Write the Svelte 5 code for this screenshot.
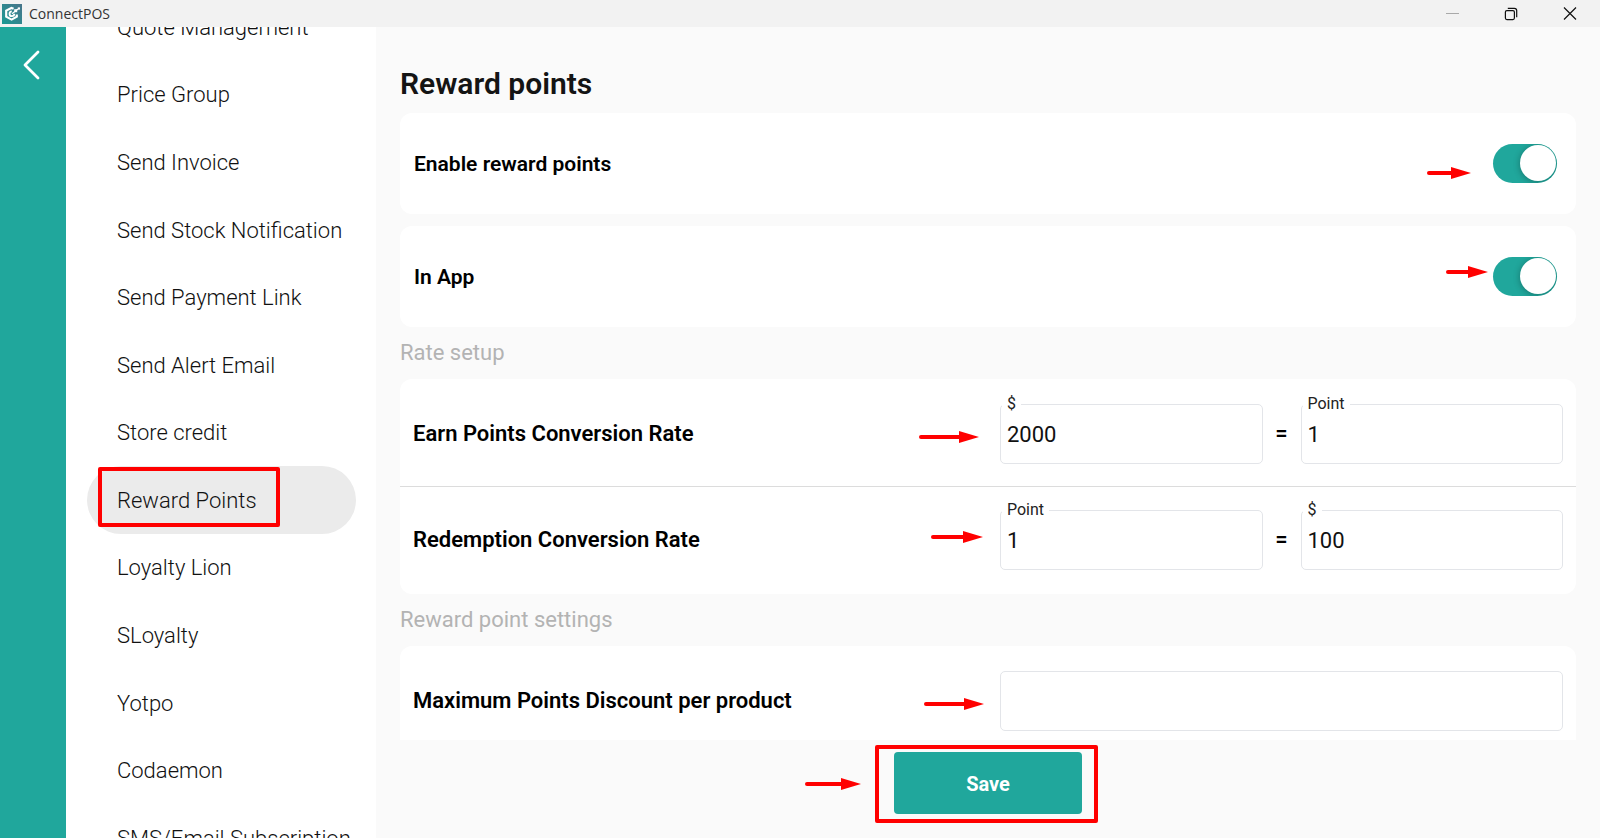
<script>
  const sections = [
    'Quote Management',
    'Price Group',
    'Send Invoice',
    'Send Stock Notification',
    'Send Payment Link',
    'Send Alert Email',
    'Store credit',
    'Reward Points',
    'Loyalty Lion',
    'SLoyalty',
    'Yotpo',
    'Codaemon',
    'SMS/Email Subscription'
  ];

  let current = $state('Reward Points');

  let switches = $state([
    { id: 'enable', label: 'Enable reward points', on: true, arrow: 44, right: 105, drop: 9 },
    { id: 'inapp', label: 'In App', on: true, arrow: 42, right: 88, drop: -5 }
  ]);

  let rates = $state([
    {
      id: 'earn',
      title: 'Earn Points Conversion Rate',
      from: { unit: '$', value: '2000' },
      to: { unit: 'Point', value: '1' },
      arrow: 60,
      right: 597,
      drop: 4
    },
    {
      id: 'redeem',
      title: 'Redemption Conversion Rate',
      from: { unit: 'Point', value: '1' },
      to: { unit: '$', value: '100' },
      arrow: 52,
      right: 593,
      drop: -3
    }
  ]);

  let maximum = $state('');
</script>

{#snippet pointer(length, right, drop)}
  <svg
    class="pointer"
    style="right: {right}px; margin-top: {drop - 7}px"
    width={length}
    height="14"
    viewBox="0 0 {length} 14"
    aria-hidden="true"
  >
    <path d="M2 7H{length - 18}" stroke="#f00" stroke-width="4" stroke-linecap="round" />
    <path d="M{length - 20} 1L{length} 7L{length - 20} 13Z" fill="#f00" />
  </svg>
{/snippet}

{#snippet field(id, data)}
  <div class="field">
    <label for={id}>{data.unit}</label>
    <input {id} type="text" bind:value={data.value} />
  </div>
{/snippet}

<div class="window">
  <header class="titlebar">
    <svg class="logo" width="20" height="20" viewBox="0 0 20 20" aria-hidden="true">
      <defs>
        <linearGradient id="tile" x1="0" y1="1" x2="1" y2="0">
          <stop offset="0" stop-color="#1b9a94" />
          <stop offset="1" stop-color="#48748a" />
        </linearGradient>
      </defs>
      <rect width="20" height="20" fill="url(#tile)" />
      <path
        d="M11.6 4.8L9.4 3.9L4.2 6.6V12.6L9.6 15.6L14.8 12.6V10.4"
        fill="none"
        stroke="#fff"
        stroke-width="2.2"
      />
      <path d="M12.3 9.8A2.4 2.4 0 1 1 9.8 7.4" fill="none" stroke="#fff" stroke-width="1.8" />
      <path d="M10 9.8L16 5" stroke="#fff" stroke-width="1.2" />
      <rect x="12.2" y="5.2" width="3" height="3" fill="#fff" />
      <rect x="15.8" y="3.4" width="2.2" height="2.2" fill="#fff" />
    </svg>
    <span class="name">ConnectPOS</span>
    <div class="controls">
      <button type="button" aria-label="Minimize">
        <svg width="14" height="14" viewBox="0 0 14 14"><path d="M1 6.5H14" stroke="#a9a9a9" /></svg>
      </button>
      <button type="button" aria-label="Restore">
        <svg width="14" height="14" viewBox="0 0 14 14" fill="none" stroke="#111" stroke-width="1.2">
          <rect x="1.4" y="3.6" width="9" height="9" rx="1.5" />
          <path d="M3.8 1.3H10.4A2.3 2.3 0 0 1 12.7 3.6V10.2" />
        </svg>
      </button>
      <button type="button" aria-label="Close">
        <svg width="14" height="14" viewBox="0 0 14 14">
          <path d="M1 0.5L13 12.5M13 0.5L1 12.5" stroke="#111" stroke-width="1.2" />
        </svg>
      </button>
    </div>
  </header>

  <div class="body">
    <aside class="rail">
      <button type="button" aria-label="Back">
        <svg width="20" height="30" viewBox="0 0 20 30">
          <path
            d="M16 2L3 15L16 28"
            fill="none"
            stroke="#fff"
            stroke-width="2.8"
            stroke-linecap="round"
            stroke-linejoin="round"
          />
        </svg>
      </button>
    </aside>

    <nav class="menu">
      <ul>
        {#each sections as section}
          <li>
            <button
              type="button"
              class:active={section === current}
              onclick={() => (current = section)}
            >
              {section}
              {#if section === 'Reward Points'}<span class="frame"></span>{/if}
            </button>
          </li>
        {/each}
      </ul>
    </nav>

    <main>
      <div class="scroller">
        <h1>Reward points</h1>

        {#each switches as item}
          <section class="card toggle-row">
            <label for={item.id}>{item.label}</label>
            {@render pointer(item.arrow, item.right, item.drop)}
            <input id={item.id} type="checkbox" role="switch" bind:checked={item.on} />
          </section>
        {/each}

        <h2>Rate setup</h2>
        <section class="card rates">
          {#each rates as rate}
            <div class="rate-row">
              <span class="title">{rate.title}</span>
              {@render pointer(rate.arrow, rate.right, rate.drop)}
              <div class="fields">
                {@render field(rate.id + '-from', rate.from)}
                <span class="equals">=</span>
                {@render field(rate.id + '-to', rate.to)}
              </div>
            </div>
          {/each}
        </section>

        <h2>Reward point settings</h2>
        <section class="card">
          <div class="rate-row">
            <label class="title" for="maximum">Maximum Points Discount per product</label>
            {@render pointer(60, 592, 4)}
            <div class="fields">
              <div class="field"><input id="maximum" type="text" bind:value={maximum} /></div>
            </div>
          </div>
        </section>
      </div>

      <footer>
        <div class="save">
          <span class="frame"></span>
          {@render pointer(56, 221, 1)}
          <button type="button">Save</button>
        </div>
      </footer>
    </main>
  </div>
</div>

<style>
  :global(body) {
    margin: 0;
    background: #fafafa;
  }

  .window,
  .window * {
    box-sizing: border-box;
  }

  .window {
    display: flex;
    flex-direction: column;
    height: 100vh;
    overflow: hidden;
    font-family: Roboto, sans-serif;
    font-size: 22px;
    line-height: 28px;
    color: #000;
  }

  button {
    padding: 0;
    border: 0;
    background: none;
    font: inherit;
    color: inherit;
    cursor: pointer;
  }

  .titlebar {
    display: flex;
    flex: none;
    align-items: center;
    height: 27px;
    padding: 0 1px 0 2px;
    background: #f2f2f2;
  }

  .name {
    margin-left: 7px;
    font-family: 'Open Sans', sans-serif;
    font-size: 14px;
    line-height: 20px;
    color: #333;
  }

  .controls {
    display: flex;
    height: 100%;
    margin-left: auto;
  }

  .controls button {
    display: grid;
    place-items: center;
    width: 59px;
  }

  .body {
    display: flex;
    flex: 1;
    min-height: 0;
  }

  .rail {
    flex: none;
    width: 66px;
    padding: 23px 0 0 22px;
    background: #20a79c;
  }

  .rail svg {
    display: block;
  }

  .menu {
    flex: none;
    width: 310px;
    padding: 0 20px 0 21px;
    overflow: hidden;
    background: #fff;
  }

  .menu ul {
    display: grid;
    grid-template-columns: minmax(0, 1fr);
    grid-auto-rows: calc(100% / 12);
    height: 100%;
    margin: -34px 0 0;
    padding: 0;
    list-style: none;
  }

  .menu button {
    position: relative;
    width: 100%;
    height: 100%;
    padding: 2px 0 0 30px;
    border-radius: 34px;
    font-weight: 300;
    text-align: left;
    white-space: nowrap;
    color: #111;
  }

  .menu button.active {
    background: #ebebeb;
  }

  .frame {
    position: absolute;
    border: 4px solid #f00;
    border-radius: 2px;
    pointer-events: none;
  }

  .menu .frame {
    inset: 1px 76px 7px 11px;
  }

  main {
    display: flex;
    flex: 1;
    flex-direction: column;
    min-width: 0;
    background: #fafafa;
  }

  .scroller {
    flex: 1;
    min-height: 0;
    padding: 37px 24px 0;
    overflow: hidden;
  }

  h1 {
    margin: 0 0 9px;
    font-size: 30px;
    font-weight: 600;
    line-height: 40px;
    color: #141414;
  }

  h2 {
    margin: 0;
    font-size: 22px;
    font-weight: 400;
    line-height: 52px;
    color: #b3b3b3;
  }

  .card {
    border-radius: 12px;
    background: #fff;
  }

  .toggle-row {
    position: relative;
    display: flex;
    align-items: center;
    justify-content: space-between;
    height: 101px;
    padding: 0 19px 0 14px;
    font-size: 21px;
    font-weight: 600;
  }

  .toggle-row + .toggle-row {
    margin-top: 12px;
  }

  .toggle-row input {
    width: 64px;
    height: 39px;
    margin: 0;
    padding: 1px;
    border-radius: 20px;
    appearance: none;
    background: #c4c4c4;
    overflow: hidden;
    cursor: pointer;
  }

  .toggle-row input::before {
    content: '';
    display: block;
    width: 36px;
    height: 36px;
    border-radius: 50%;
    background: #fff;
    box-shadow: 0 1px 7px rgba(0, 0, 0, 0.3);
  }

  .toggle-row input:checked {
    background: #20a79c;
  }

  .toggle-row input:checked::before {
    margin-left: auto;
  }

  .rate-row {
    position: relative;
    display: flex;
    align-items: center;
    height: 107px;
    padding: 3px 13px 0;
  }

  .rates .rate-row + .rate-row {
    height: 108px;
    padding-top: 0;
    box-shadow: inset 0 1px #dcdcdc;
  }

  .title {
    flex: 1;
    font-weight: 600;
  }

  .fields {
    display: flex;
    width: 563px;
  }

  .field {
    position: relative;
    flex: 1;
    min-width: 0;
  }

  .field label {
    position: absolute;
    top: -10px;
    left: 2px;
    padding: 0 5px;
    background: #fff;
    font-size: 16px;
    line-height: 20px;
    color: #222;
  }

  .field input {
    display: block;
    width: 100%;
    height: 60px;
    padding: 0 6px;
    border: 1px solid #e3e5e9;
    border-radius: 5px;
    outline: none;
    background: #fff;
    font: inherit;
    color: #111;
  }

  .equals {
    width: 38px;
    line-height: 60px;
    text-align: center;
    font-weight: 500;
  }

  .pointer {
    position: absolute;
    top: 50%;
    overflow: visible;
  }

  footer {
    display: flex;
    flex: none;
    justify-content: center;
    padding: 12px 24px 24px;
  }

  .save {
    position: relative;
  }

  .save .frame {
    inset: -7px -16px -9px -19px;
  }

  .save button {
    width: 188px;
    height: 62px;
    padding-top: 1px;
    border-radius: 4px;
    background: #20a79c;
    font-size: 20px;
    font-weight: 700;
    color: #fff;
  }
</style>
